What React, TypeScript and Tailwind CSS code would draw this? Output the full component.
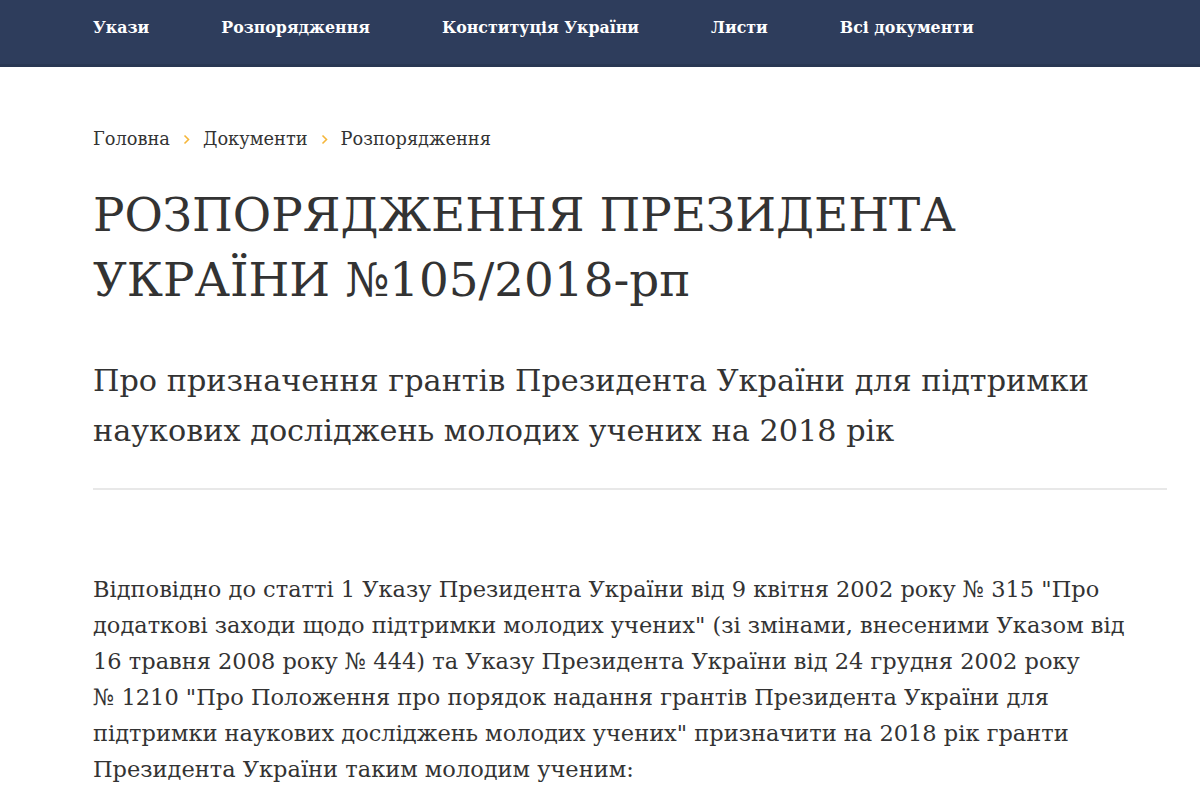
import React from "react";

const serif = { fontFamily: '"DejaVu Serif", "Liberation Serif", serif' };

function Chevron() {
  return (
    <svg width="7" height="11" viewBox="0 0 7 11" className="mx-[13px]" aria-hidden>
      <path d="M1.5 1.5 L5.5 5.5 L1.5 9.5" fill="none" stroke="#f5b63a" strokeWidth="1.6" />
    </svg>
  );
}

export default function App() {
  const nav = ["Укази", "Розпорядження", "Конституція України", "Листи", "Всі документи"];
  const body = [
    'Відповідно до статті 1 Указу Президента України від 9 квітня 2002 року № 315 "Про',
    'додаткові заходи щодо підтримки молодих учених" (зі змінами, внесеними Указом від',
    '16 травня 2008 року № 444) та Указу Президента України від 24 грудня 2002 року',
    '№ 1210 "Про Положення про порядок надання грантів Президента України для',
    'підтримки наукових досліджень молодих учених" призначити на 2018 рік гранти',
    'Президента України таким молодим ученим:',
  ];
  return (
    <div className="min-h-screen bg-white" style={serif}>
      <header className="h-[67px] bg-[#2e3d5c] border-b-[3px] border-[#293753] pt-[19px]">
        <nav className="ml-[93px] flex gap-[72px]">
          {nav.map((n) => (
            <a key={n} className="text-white font-bold text-[15.8px] leading-[18px]">{n}</a>
          ))}
        </nav>
      </header>
      <main className="ml-[93px] w-[1074px]">
        <div className="mt-[59px] flex items-center text-[17.8px] text-[#333]">
          <span>Головна</span>
          <Chevron />
          <span>Документи</span>
          <Chevron />
          <span>Розпорядження</span>
        </div>
        <h1 className="mt-[30px] text-[46.8px] leading-[65px] text-[#333] font-normal">
          РОЗПОРЯДЖЕННЯ ПРЕЗИДЕНТА<br />УКРАЇНИ №105/2018-рп
        </h1>
        <h2 className="mt-[43px] text-[30.3px] leading-[50px] text-[#333] font-normal">
          Про призначення грантів Президента України для підтримки наукових досліджень молодих учених на 2018 рік
        </h2>
        <hr className="mt-[32px] border-0 border-t-2 border-[#e8e8e8]" />
        <p className="mt-[81px] text-[22.5px] leading-[36px] text-[#333]">
          {body.map((l, i) => (
            <span key={i} className="block whitespace-nowrap">{l}</span>
          ))}
        </p>
      </main>
    </div>
  );
}
